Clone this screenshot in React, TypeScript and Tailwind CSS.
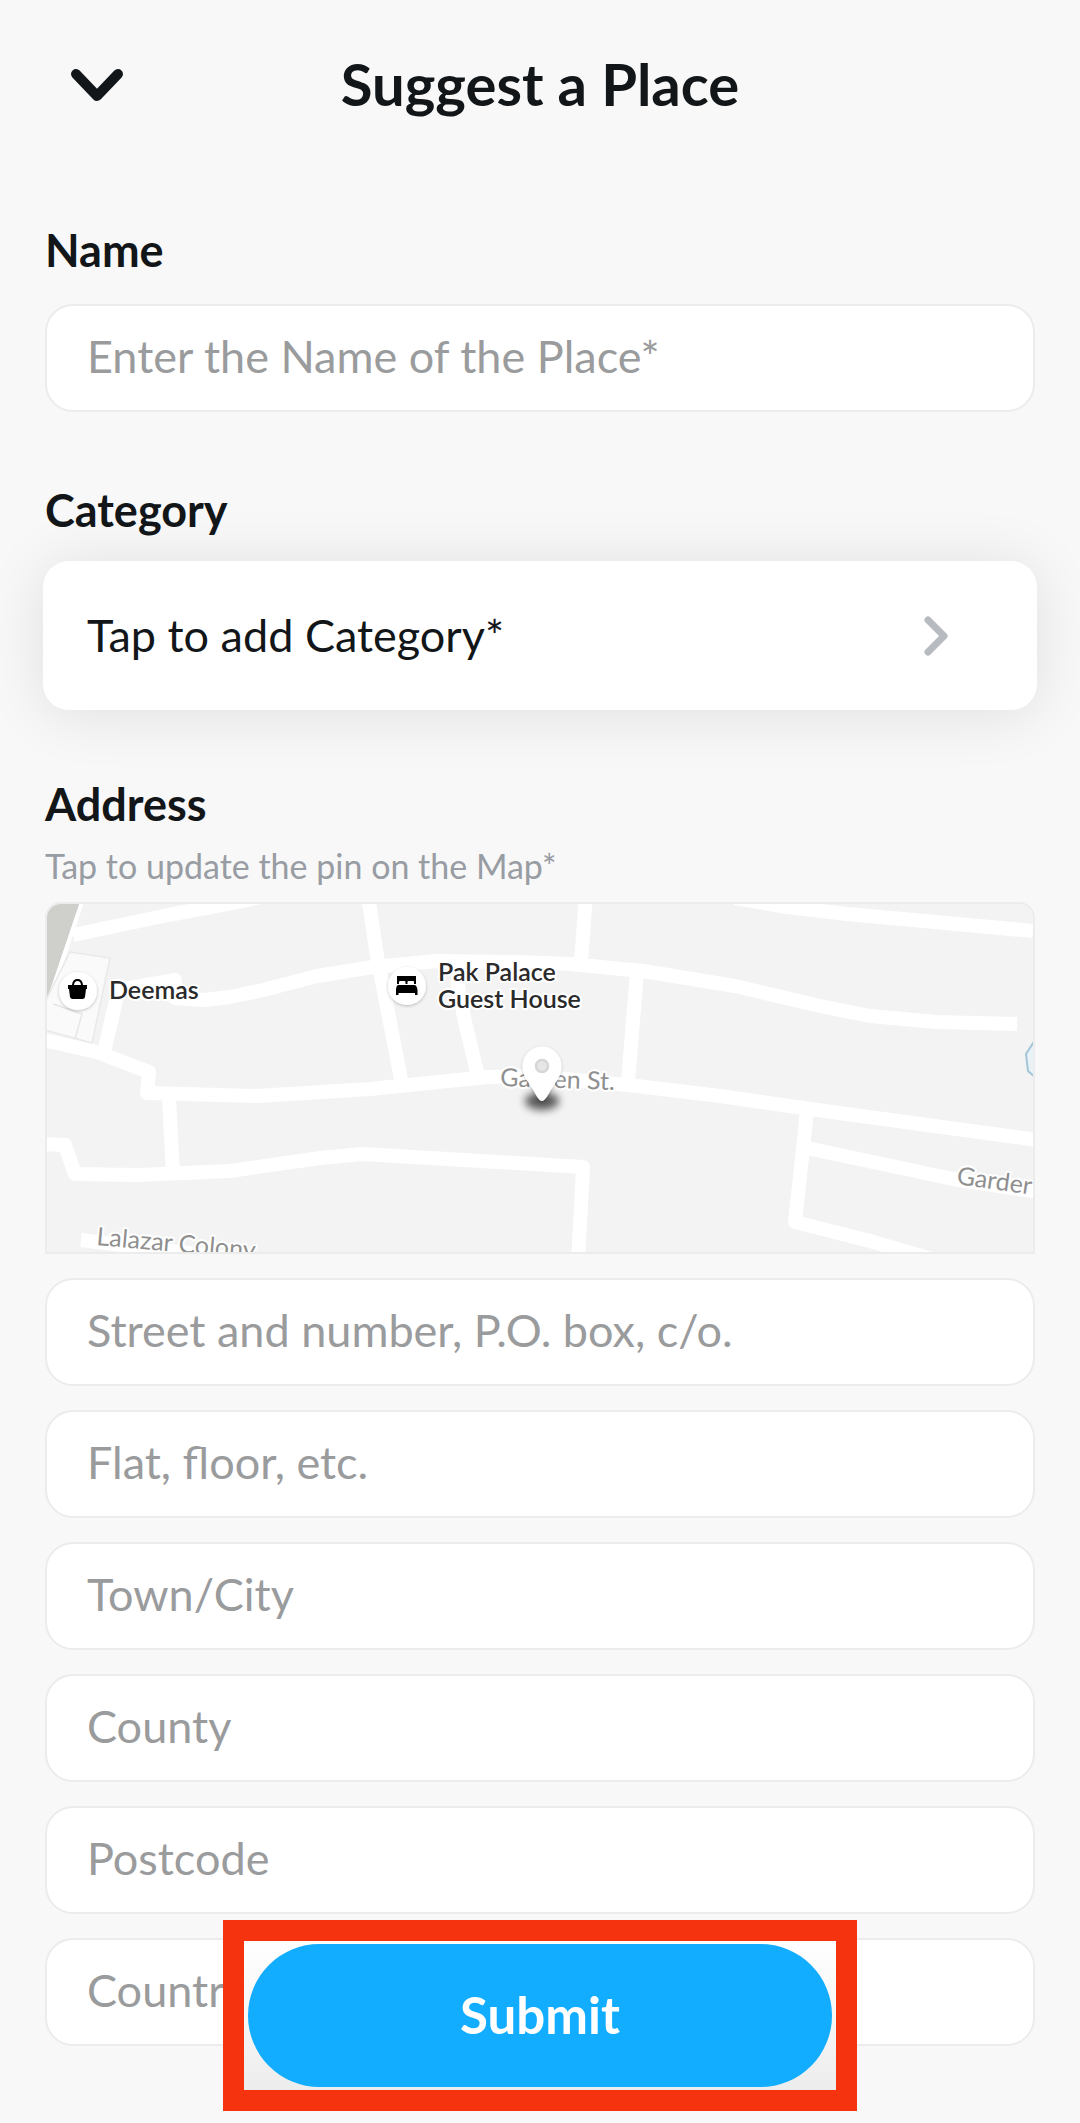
const addressFields = [
  { id: 'street', placeholder: 'Street and number, P.O. box, c/o.' },
  { id: 'flat', placeholder: 'Flat, floor, etc.' },
  { id: 'town', placeholder: 'Town/City' },
  { id: 'county', placeholder: 'County' },
  { id: 'postcode', placeholder: 'Postcode' },
  { id: 'country', placeholder: 'Country' },
]

const roads = [
  'M28 33 L123 13 L182 2 L240 -10',
  'M59 150 L72 94 L73 88 L130 78 L130 96 L158 98 L185 95 L218 88 L272 74 L328 65 L392 59 L475 60 L525 62 L598 69 L690 84 L775 104 L825 114 L892 120 L972 122',
  'M323 -6 L332 54 L357 182',
  'M541 -6 L536 60',
  'M592 70 L583 180',
  'M413 64 L413 84 L420 120 L434 178',
  'M-6 137 L52 150 L104 170 L102 191 L212 194 L325 187 L442 175 L490 174 L592 184 L675 194 L765 207 L1000 239',
  'M124 195 L128 272',
  'M-6 242 L20 243 L30 272 L92 273 L185 269 L275 256 L318 252 L538 265 L533 360',
  'M690 -4 L742 5 L802 12 L988 29',
  'M762 207 L758 247 L750 320 L825 339 L890 358',
  'M762 246 L908 277 L1000 291',
  'M36 338 L200 358',
]

function Field({ id, label, placeholder }: { id: string; label?: string; placeholder: string }) {
  return (
    <input
      id={id}
      type="text"
      aria-label={label}
      placeholder={placeholder}
      className="block h-27 w-full rounded-[28px] border-2 border-[#ececec] bg-white px-10 pb-1 text-[45px] text-[#16191c] outline-none placeholder:text-[#9a9b9d]"
    />
  )
}

function MapPreview() {
  return (
    <svg viewBox="2 2 986 348" className="block w-full" role="img" aria-label="Map">
      <defs>
        <filter id="soft" x="-50%" y="-100%" width="200%" height="300%">
          <feGaussianBlur stdDeviation="4" />
        </filter>
        <filter id="lift" x="-30%" y="-30%" width="160%" height="160%">
          <feDropShadow dx="0" dy="1" stdDeviation="1.5" floodOpacity="0.25" />
        </filter>
      </defs>
      <rect width="990" height="352" fill="#f3f3f3" />

      {/* Buildings, top left */}
      <path d="M0 0 H35 L2 98 H0 Z" fill="#cfcfcb" />
      <path d="M37 0 L4 98" stroke="#fff" strokeWidth="4" />
      <path d="M25 50 L65 56 L47 141 L0 128 V100 Z" fill="#fafafa" stroke="#e9e9e9" strokeWidth="1.5" />
      <path d="M8 102 L37 112 L30 137" fill="none" stroke="#e6e6e6" strokeWidth="1.5" />

      <g fill="none" stroke="#fff" strokeWidth="14" strokeLinejoin="round">
        {roads.map((d) => (
          <path key={d} d={d} />
        ))}
      </g>

      {/* Water, right edge */}
      <path d="M992 135 L981 152 L983 169 L992 177" fill="#e8f2f7" stroke="#a3c6d6" strokeWidth="2" />

      {/* Shop */}
      <circle cx="33" cy="89" r="19" fill="#fff" filter="url(#lift)" />
      <path d="M23 83 H42 V87 H41 L40 95 Q39.500 97 37.500 97 H27.500 Q25.500 97 25 95 L24 87 H23 Z" />
      <path d="M28 83 Q28.500 78 32.500 78 Q36.500 78 37 83" fill="none" stroke="#000" strokeWidth="2" />

      {/* Hotel */}
      <circle cx="362" cy="84" r="19" fill="#fff" filter="url(#lift)" />
      <path d="M352 74 H371 V82 H369 V80 Q369 79 368 79 H363.500 Q362.500 79 362.500 80 V82 H360.500 V80 Q360.500 79 359.500 79 H355 Q354 79 354 80 V82 H352 Z" />
      <path d="M353 83 H370 Q372 84 372.500 88 V93 H370 V91 H353.500 V93 H351 V88 Q351 84 353 83 Z" />

      <g fontSize="25" stroke="#fff" strokeWidth="4" strokeLinejoin="round" paintOrder="stroke">
        <g fill="#2a2a2a" className="font-semibold">
          <text x="64" y="97">Deemas</text>
          <text x="393" y="79">Pak Palace</text>
          <text x="393" y="106">Guest House</text>
        </g>
        <g fill="#8f8f8f">
          <text x="455" y="184" transform="rotate(2 455 184)">Garden St.</text>
          <text x="911" y="282" transform="rotate(8 911 282)">Garder</text>
          <text x="51" y="343" transform="rotate(5 51 343)">Lalazar Colony</text>
        </g>
      </g>

      {/* Pin */}
      <ellipse cx="497" cy="199" rx="17" ry="9" opacity="0.65" filter="url(#soft)" />
      <path
        d="M497 199 C494 199 491 193 487 186 C482 178 477.500 174 477.500 164 A19.500 19.500 0 0 1 516.500 164 C516.500 174 512 178 507 186 C503 193 500 199 497 199 Z"
        fill="#fff"
        filter="url(#lift)"
      />
      <circle cx="497" cy="164" r="6" fill="#e6e6e6" stroke="#d6d6d6" strokeWidth="2.500" />
    </svg>
  )
}

export default function App() {
  return (
    <main className="min-h-screen bg-[#f8f8f8] px-[45px] pb-19 font-['Lato',sans-serif] text-[#121619]">
      <header className="grid h-42 grid-cols-[104px_1fr_104px] items-center">
        <button type="button" aria-label="Close" className="flex size-[104px] items-center justify-center">
          <svg width="52" height="36" viewBox="0 0 52 36" fill="none">
            <path d="M5 8 L26 30 L47 8" stroke="#121619" strokeWidth="10" strokeLinecap="round" strokeLinejoin="round" />
          </svg>
        </button>
        <h1 className="text-center text-[58px] leading-16 font-bold">Suggest a Place</h1>
      </header>

      <form>
        <section className="pt-14">
          <label htmlFor="name" className="block pb-7 text-[45px] leading-13 font-bold">
            Name
          </label>
          <Field id="name" placeholder="Enter the Name of the Place*" />
        </section>

        <section className="pt-18">
          <h2 className="pb-[25px] text-[45px] leading-13 font-bold">Category</h2>
          <button
            type="button"
            className="-mx-0.5 flex h-[149px] w-[calc(100%+4px)] items-center justify-between rounded-[26px] bg-white pr-[89px] pl-11 text-[45px] shadow-[0_4px_60px_rgba(0,0,0,0.1)]"
          >
            Tap to add Category*
            <svg width="24" height="44" viewBox="0 0 24 44" fill="none">
              <path d="M4 6 L20 22 L4 38" stroke="#b7bbc1" strokeWidth="7" strokeLinecap="round" strokeLinejoin="round" />
            </svg>
          </button>
        </section>

        <section className="pt-17">
          <h2 className="text-[45px] leading-13 font-bold">Address</h2>
          <p className="py-4 text-[34px] leading-10 text-[#989ca3]">Tap to update the pin on the Map*</p>
          <button type="button" aria-label="Update the pin" className="block w-full overflow-hidden rounded-t-[16px] border-2 border-[#ececec]">
            <MapPreview />
          </button>
          <div className="flex flex-col gap-6 pt-6">
            {addressFields.map((field) => (
              <Field key={field.id} id={field.id} label={field.placeholder} placeholder={field.placeholder} />
            ))}
          </div>
        </section>

        {/* Submit stays over the end of the form */}
        <div className="fixed bottom-3 left-1/2 -translate-x-1/2 border-[21px] border-[#f6330f] bg-linear-to-b from-white to-[#ededed] px-1 py-[3px]">
          <button type="submit" className="block h-[143px] w-[584px] rounded-full bg-[#12adff] text-[51px] font-bold text-white">
            Submit
          </button>
        </div>
      </form>
    </main>
  )
}
